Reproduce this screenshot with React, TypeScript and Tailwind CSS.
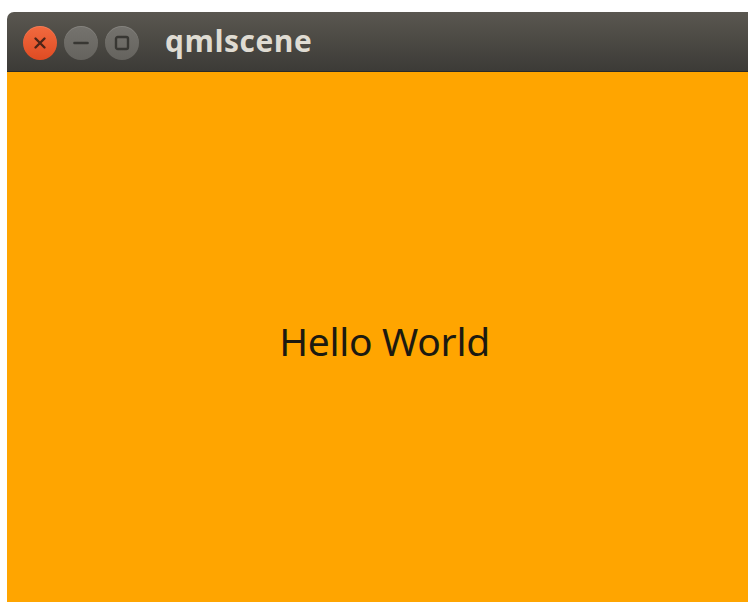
// Ubuntu-style window hosting a QML scene with a single centered label
function TitleButton({ kind }: { kind: 'close' | 'min' | 'max' }) {
  const base = 'w-[34px] h-[34px] rounded-full flex items-center justify-center shadow-[inset_0_1px_0_rgba(255,255,255,0.12)]';
  if (kind === 'close') {
    return (
      <div className={`${base} bg-gradient-to-b from-[#f26a3f] to-[#df4b22]`}>
        <svg width="14" height="14" viewBox="0 0 14 14">
          <path d="M2.5 2.5 L11.5 11.5 M11.5 2.5 L2.5 11.5" stroke="#4d2418" strokeWidth="2.4" strokeLinecap="round" />
        </svg>
      </div>
    );
  }
  return (
    <div className={`${base} bg-gradient-to-b from-[#75736e] to-[#65635e]`}>
      {kind === 'min' ? (
        <svg width="18" height="18" viewBox="0 0 18 18">
          <path d="M2.5 9 H15.5" stroke="#383733" strokeWidth="2.6" strokeLinecap="round" />
        </svg>
      ) : (
        <svg width="18" height="18" viewBox="0 0 18 18">
          <rect x="3" y="3" width="12" height="12" rx="1.8" fill="none" stroke="#383733" strokeWidth="2.4" />
        </svg>
      )}
    </div>
  );
}

export default function App() {
  return (
    <div className="w-[748px] h-[602px] bg-white pt-[12px] pl-[7px] flex flex-col overflow-hidden">
      {/* window title bar */}
      <div className="h-[60px] shrink-0 rounded-tl-[7px] bg-gradient-to-b from-[#5a5750] to-[#3c3b37] border-b border-[#2b2a27] flex items-center pl-[16px] pt-[3px]">
        <div className="flex items-center gap-[7px]">
          <TitleButton kind="close" />
          <TitleButton kind="min" />
          <TitleButton kind="max" />
        </div>
        <span className="ml-[26px] -mt-[4px] text-[30px] font-bold tracking-[0.5px] text-[#dfdbd2] leading-none font-['Open_Sans',sans-serif]">
          qmlscene
        </span>
      </div>

      {/* scene content */}
      <div className="flex-1 bg-[#ffa500] flex items-center justify-center">
        <span className="ml-[14px] mt-[6px] text-[39px] tracking-[-0.3px] text-[#1c1a10] leading-none font-['Noto_Sans',sans-serif]">
          Hello World
        </span>
      </div>
    </div>
  );
}
